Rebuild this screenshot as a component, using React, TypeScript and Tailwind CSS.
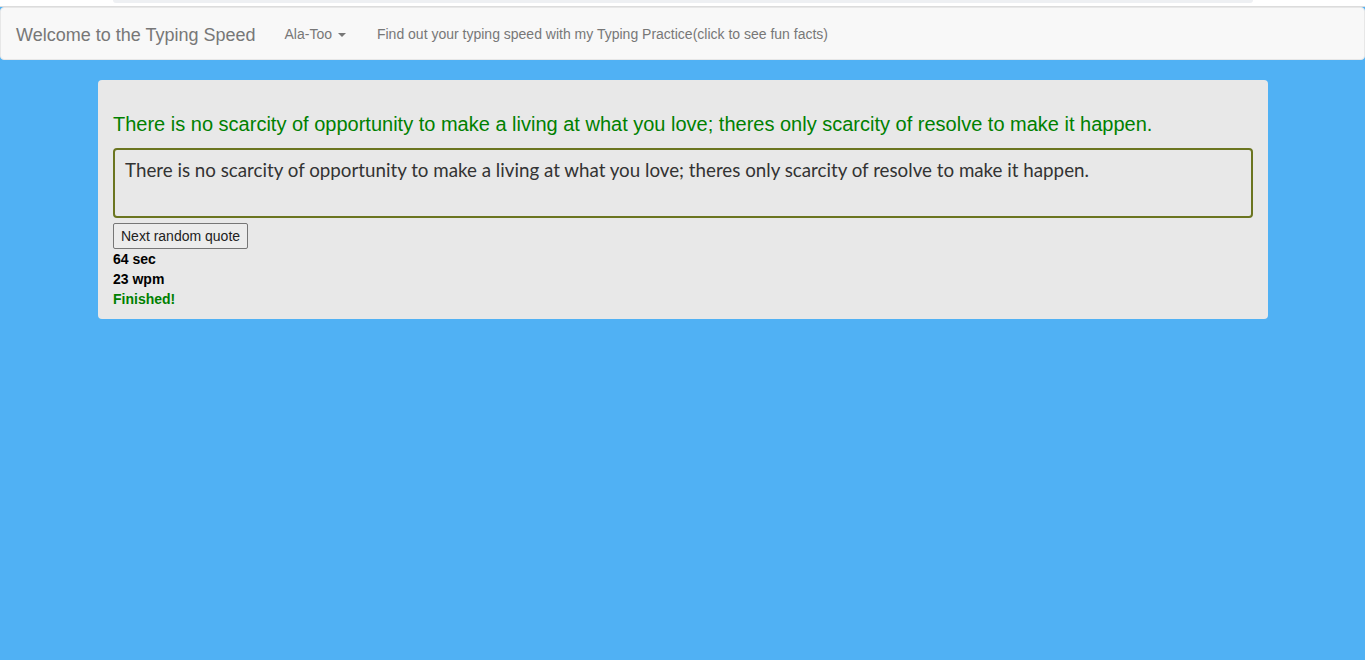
import React from "react";

export default function App() {
  return (
    <div className="min-h-[660px] bg-[#50b1f4] font-['Liberation_Sans',Arial,sans-serif]">
      <div className="h-[7px] bg-white flex justify-center border-b border-[#dcdcdc]">
        <div className="w-[1140px] h-[3px] bg-[#eef0f3] rounded-b-[6px]" />
      </div>
      <nav className="h-[53px] bg-[#f8f8f8] border border-[#e7e7e7] rounded-[4px] flex items-center pt-[2px]">
        <span className="pl-[15px] text-[18px] text-[#777] leading-[20px]">Welcome to the Typing Speed</span>
        <span className="ml-[29px] text-[14px] text-[#777] flex items-center">
          Ala-Too
          <span className="ml-[6px] w-0 h-0 border-l-[4px] border-r-[4px] border-t-[4px] border-l-transparent border-r-transparent border-t-[#777]" />
        </span>
        <span className="ml-[31px] text-[14px] text-[#777]">
          Find out your typing speed with my Typing Practice(click to see fun facts)
        </span>
      </nav>
      <div className="pt-[20px] pl-[98px] pr-[97px]">
        <div className="bg-[#e8e8e8] rounded-[4px] px-[15px] pt-[30px] pb-[10px]">
          <div className="text-[20px] leading-[28px] text-[#008000]">
            There is no scarcity of opportunity to make a living at what you love; theres only scarcity of resolve to make it happen.
          </div>
          <div className="mt-[10px] h-[70px] border-2 border-[#6b7520] rounded-[4px] px-[10px] pt-[6px] text-[18.75px] leading-[28px] text-[#333] font-['Lato',sans-serif]">
            There is no scarcity of opportunity to make a living at what you love; theres only scarcity of resolve to make it happen.
          </div>
          <button className="mt-[5px] h-[26px] px-[7px] border border-[#767676] rounded-[2px] bg-[#ececec] text-[14px] text-[#222] leading-[20px]">
            Next random quote
          </button>
          <div className="text-[14px] font-bold leading-[20px] text-black">64 sec</div>
          <div className="text-[14px] font-bold leading-[20px] text-black">23 wpm</div>
          <div className="text-[14px] font-bold leading-[20px] text-[#008000]">Finished!</div>
        </div>
      </div>
    </div>
  );
}
